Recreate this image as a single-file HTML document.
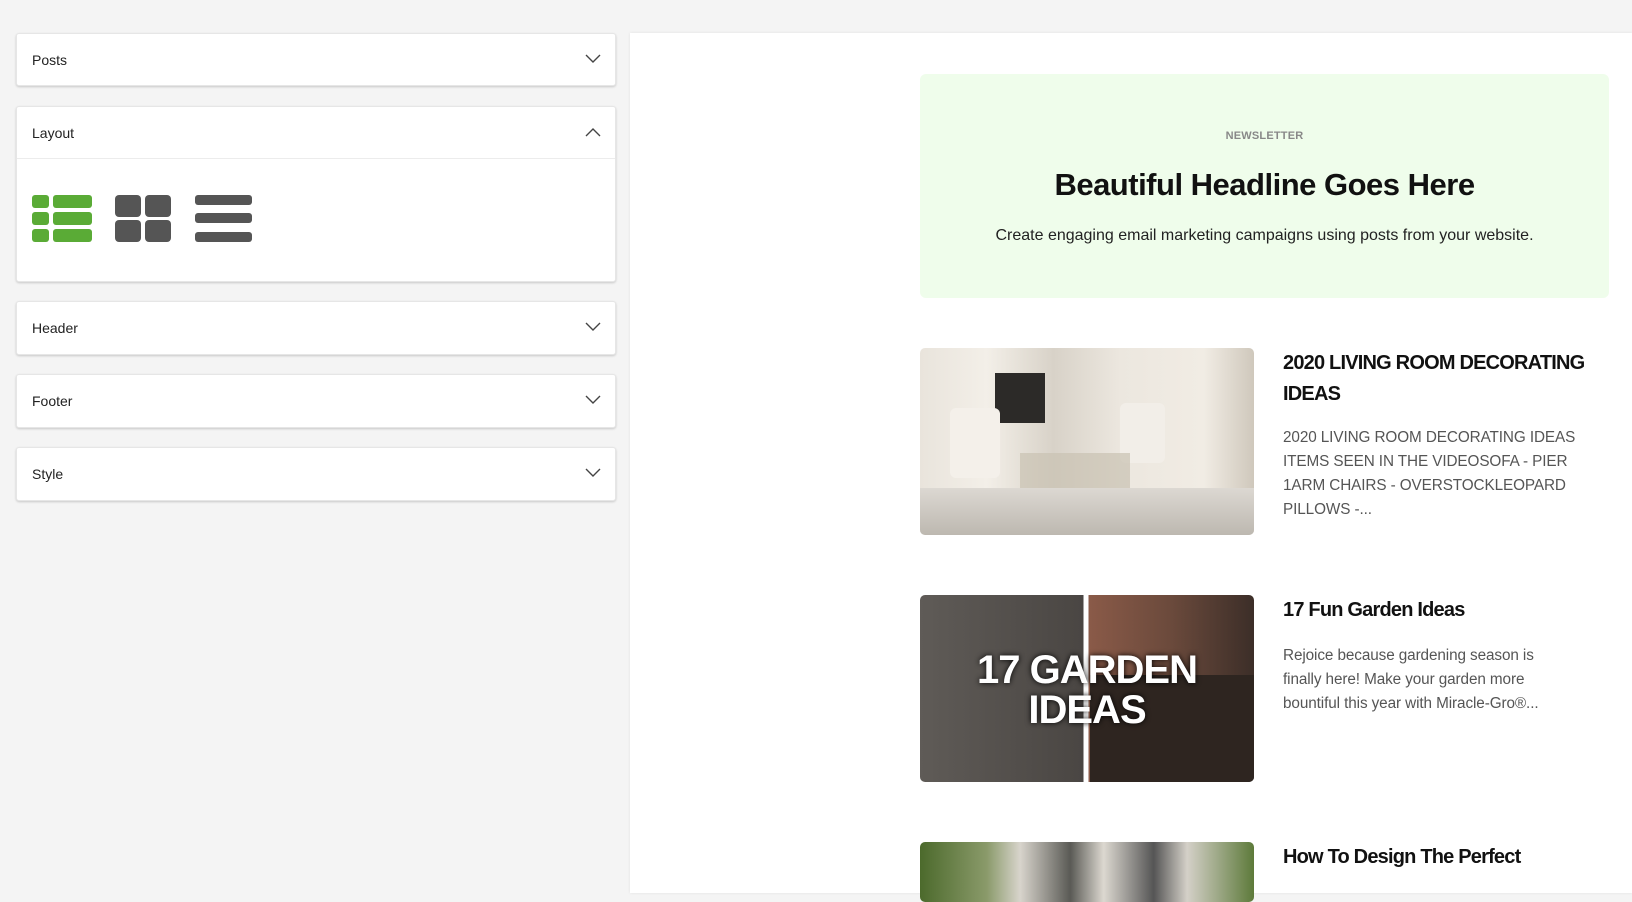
<!DOCTYPE html>
<html><head><style>
*{margin:0;padding:0;box-sizing:border-box}
body{width:1632px;height:882px;background:#f4f4f4;font-family:"Liberation Sans",sans-serif;position:relative;overflow:hidden}
.p{position:absolute;left:16px;width:600px;background:#fff;border-radius:3px;box-shadow:0 1px 2px rgba(0,0,0,.18);border:1px solid #e6e6e6}
.p .h{height:52px;padding-left:15px;font-size:14px;color:#222;display:flex;align-items:center;position:relative}
.p svg.c{position:absolute;right:14px;top:20px}
.r{position:absolute;left:630px;top:33px;width:1002px;height:860px;background:#fff;box-shadow:0 0 3px rgba(0,0,0,.08)}
.nl{position:absolute;left:920px;top:74px;width:689px;height:224px;background:#effdeb;border-radius:6px;text-align:center}
.t{position:absolute;left:1283px;font-weight:bold;font-size:20px;color:#111;letter-spacing:-.8px;line-height:31px;width:310px}
.e{position:absolute;left:1283px;font-size:15.3px;color:#555;line-height:24px;width:292px;letter-spacing:-.1px}
.im{position:absolute;left:920px;width:334px;border-radius:5px;overflow:hidden}
</style></head><body>
<div class="p" style="top:33px;height:53px"><div class="h">Posts<svg class="c" width="16" height="10"><path d="M1 1l7 7 7-7" stroke="#444" stroke-width="1.4" fill="none"/></svg></div></div>
<div class="p" style="top:106px;height:176px"><div class="h" style="border-bottom:1px solid #ececec">Layout<svg class="c" width="16" height="10"><path d="M1 9l7-7 7 7" stroke="#444" stroke-width="1.4" fill="none"/></svg></div>
<svg style="position:absolute;left:15px;top:88px" width="230" height="50">
<g fill="#5aab36"><rect x="0" y="0" width="17" height="13" rx="3"/><rect x="21" y="0" width="39" height="13" rx="3"/><rect x="0" y="17" width="17" height="13" rx="3"/><rect x="21" y="17" width="39" height="13" rx="3"/><rect x="0" y="34" width="17" height="13" rx="3"/><rect x="21" y="34" width="39" height="13" rx="3"/></g>
<g fill="#555"><rect x="83" y="0" width="26" height="22" rx="4"/><rect x="113" y="0" width="26" height="22" rx="4"/><rect x="83" y="25" width="26" height="22" rx="4"/><rect x="113" y="25" width="26" height="22" rx="4"/>
<rect x="163" y="0" width="57" height="10" rx="3"/><rect x="163" y="18" width="57" height="10" rx="3"/><rect x="163" y="37" width="57" height="10" rx="3"/></g></svg></div>
<div class="p" style="top:301px;height:54px"><div class="h">Header<svg class="c" width="16" height="10"><path d="M1 1l7 7 7-7" stroke="#444" stroke-width="1.4" fill="none"/></svg></div></div>
<div class="p" style="top:374px;height:54px"><div class="h">Footer<svg class="c" width="16" height="10"><path d="M1 1l7 7 7-7" stroke="#444" stroke-width="1.4" fill="none"/></svg></div></div>
<div class="p" style="top:447px;height:54px"><div class="h">Style<svg class="c" width="16" height="10"><path d="M1 1l7 7 7-7" stroke="#444" stroke-width="1.4" fill="none"/></svg></div></div>
<div class="r"></div>
<div class="nl">
<div style="position:absolute;top:56px;width:100%;font-size:11px;color:#888;font-weight:bold;letter-spacing:.2px">NEWSLETTER</div>
<div style="position:absolute;top:93px;width:100%;font-size:31px;font-weight:bold;color:#111;letter-spacing:-.5px">Beautiful Headline Goes Here</div>
<div style="position:absolute;top:153px;width:100%;font-size:16px;color:#222">Create engaging email marketing campaigns using posts from your website.</div>
</div>
<div class="im" style="top:348px;height:187px;background:linear-gradient(90deg,#e9e4dc 0%,#f3efe8 20%,#d8d2c8 40%,#ece7df 60%,#f1ece4 85%,#cfc8bc 100%)">
<div style="position:absolute;left:75px;top:25px;width:50px;height:50px;background:#2c2a28"></div>
<div style="position:absolute;left:30px;top:60px;width:50px;height:70px;background:#f4f0ea;border-radius:6px"></div>
<div style="position:absolute;left:200px;top:55px;width:45px;height:60px;background:#f2eee8;border-radius:6px"></div>
<div style="position:absolute;left:100px;top:105px;width:110px;height:40px;background:#c9c2b2;opacity:.7"></div>
<div style="position:absolute;left:0;top:140px;width:334px;height:47px;background:linear-gradient(#dcd8d2,#bdb8b0)"></div></div>
<div class="t" style="top:348px">2020 LIVING ROOM DECORATING IDEAS</div>
<div class="e" style="top:426px;width:310px">2020 LIVING ROOM DECORATING IDEAS ITEMS SEEN IN THE VIDEOSOFA - PIER 1ARM CHAIRS - OVERSTOCKLEOPARD PILLOWS -...</div>
<div class="im" style="top:595px;height:187px;background:linear-gradient(90deg,#5f5b57 0%,#4a4643 49%,#fff 49%,#fff 50.5%,#8a5a48 50.5%,#6b4a3c 75%,#3c2e28 100%)">
<div style="position:absolute;left:170px;top:80px;width:164px;height:107px;background:#2e2520"></div>
<div style="position:absolute;width:100%;top:55px;text-align:center;color:#fff;font-weight:bold;font-size:40px;line-height:40px;letter-spacing:-1px;text-shadow:0 0 6px #000">17 GARDEN<br>IDEAS</div></div>
<div class="t" style="top:595px">17 Fun Garden Ideas</div>
<div class="e" style="top:644px">Rejoice because gardening season is finally here! Make your garden more bountiful this year with Miracle-Gro®...</div>
<div class="im" style="top:842px;height:60px;background:linear-gradient(90deg,#4c6a2c,#8a9a6a 20%,#d8d4cc 30%,#5a5a55 45%,#dcd8d0 55%,#555 70%,#d4d0c8 80%,#5d7a3a)"></div>
<div class="t" style="top:842px">How To Design The Perfect</div>
</body></html>
